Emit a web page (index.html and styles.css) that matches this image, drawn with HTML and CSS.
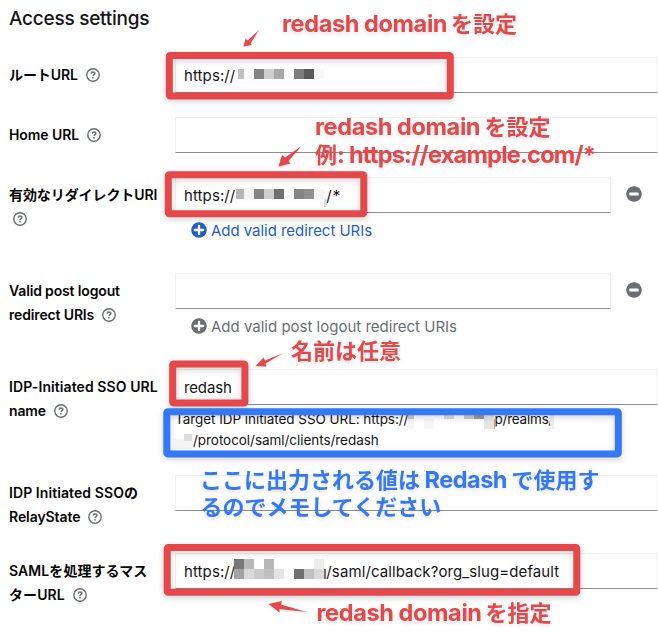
FILE: index.html
```html
<!DOCTYPE html>
<html lang="ja">
<head>
<meta charset="utf-8">
<title>Access settings</title>
<link rel="stylesheet" href="styles.css">
</head>
<body>
<svg class="defs" width="0" height="0" aria-hidden="true">
  <symbol id="help" viewBox="0 0 14 14"><circle cx="7" cy="7" r="6.200" fill="none" stroke="#6a6e73" stroke-width="1.400"/><path d="M5.100 5.600C5.200 4.500 6 4 7 4s1.900.600 1.900 1.600C8.900 6.700 7 6.700 7 8.100" fill="none" stroke="#6a6e73" stroke-width="1.400"/><circle cx="7" cy="9.800" r=".9" fill="#6a6e73"/></symbol>
  <symbol id="plus" viewBox="0 0 16 16"><circle cx="8" cy="8" r="7.800" fill="currentColor"/><path d="M8 3.800v8.400M3.800 8h8.400" stroke="#fff" stroke-width="2.300" stroke-linecap="round"/></symbol>
  <symbol id="minus" viewBox="0 0 16 16"><circle cx="8" cy="8" r="7.800" fill="#6a6e73"/><rect x="3.300" y="6.600" width="9.400" height="2.800" rx=".5" fill="#fff"/></symbol>
</svg>
<main class="page">
  <h1 class="title">Access settings</h1>
  <div class="form">
    <div class="row short"><div class="label"><span>ルートURL</span><svg class="help"><use href="#help"/></svg></div><div class="control"><div class="input">https://</div></div></div>
    <div class="row short"><div class="label"><span>Home URL</span><svg class="help"><use href="#help"/></svg></div><div class="control"><div class="input"></div></div></div>
    <div class="row tall"><div class="label"><span>有効なリダイレクトURI</span><br><svg class="help wrapped"><use href="#help"/></svg></div><div class="control"><div class="line"><div class="input"><span>https://</span><span class="suffix wild">/*</span></div><svg class="remove"><use href="#minus"/></svg></div><div class="add active"><svg><use href="#plus"/></svg><span>Add valid redirect URIs</span></div></div></div>
    <div class="row tall"><div class="label"><span class="tight">Valid post logout<br>redirect URIs</span><svg class="help"><use href="#help"/></svg></div><div class="control"><div class="line"><div class="input"></div><svg class="remove"><use href="#minus"/></svg></div><div class="add"><svg><use href="#plus"/></svg><span>Add valid post logout redirect URIs</span></div></div></div>
    <div class="row sso"><div class="label"><span class="wide">IDP-Initiated SSO URL</span><br><span class="tight">name</span><svg class="help"><use href="#help"/></svg></div><div class="control"><div class="input"><span class="tight">redash</span></div><div class="hint"><div><span>Target IDP initiated SSO URL: https://</span><span class="realms">p/realms/</span></div><div class="path">/protocol/saml/clients/redash</div></div></div></div>
    <div class="row relay"><div class="label"><span class="wide">IDP Initiated SSOの</span><br>RelayState<svg class="help"><use href="#help"/></svg></div><div class="control"><div class="input"></div></div></div>
    <div class="row relay"><div class="label"><span class="wide">SAMLを処理するマス<br>ターURL</span><svg class="help"><use href="#help"/></svg></div><div class="control"><div class="input"><span>https://</span><span class="suffix callback">/saml/callback?org_slug=default</span></div></div></div>
  </div>
  <svg class="overlay" viewBox="0 0 658 632">
    <g shape-rendering="crispEdges">
      <path fill="#c0c0c0" d="M238 69h6v10h-6z"/><path fill="#fafafa" d="M244 69h10v10h-10z"/><path fill="#858585" d="M254 69h10v10h-10z"/><path fill="#cecece" d="M264 69h10v10h-10z"/><path fill="#a8a8a8" d="M274 69h10v10h-10z"/><path fill="#7d7d7d" d="M294 69h10v10h-10z"/><path fill="#5a5a5a" d="M304 69h10v10h-10z"/><path fill="#f7f7f7" d="M314 69h10v10h-10z"/>
      <path fill="#b5b5b5" d="M236 189h8v10h-8z"/><path fill="#f3f3f3" d="M244 189h10v10h-10z"/><path fill="#858585" d="M254 189h10v10h-10z"/><path fill="#cecece" d="M264 189h10v10h-10z"/><path fill="#6f6f6f" d="M274 189h10v10h-10z"/><path fill="#f7f7f7" d="M284 189h10v10h-10z"/><path fill="#858585" d="M294 189h10v10h-10z"/><path fill="#8f8f8f" d="M304 189h10v10h-10z"/><path fill="#f5f5f5" d="M314 189h10v10h-10z"/><path fill="#ddd" d="M324 199h3v8h-3z"/>
      <path fill="#ccc" d="M408 415h6v4h-6zM464 415h10v4h-10z"/><path fill="#ddd" d="M444 415h10v4h-10zM184 434h8v7h-8z"/><path fill="#999" d="M474 415h10v4h-10z"/><path fill="#f5f5f5" d="M408 419h6v10h-6zM424 419h10v10h-10zM174 439h10v10h-10zM184 441h8v8h-8z"/><path fill="#e5e5e5" d="M484 415h10v14h-10z"/><path fill="#aaa" d="M494 419h1v10h-1z"/><path fill="#eee" d="M550 415h4v14h-4z"/>
      <path fill="#787878" d="M234 559h10v10h-10z"/><path fill="#b8b8b8" d="M244 559h10v10h-10zM264 559h10v10h-10z"/><path fill="#ececec" d="M314 559h10v10h-10z"/><path fill="#a3a3a3" d="M234 569h10v10h-10z"/><path fill="#d9d9d9" d="M244 569h10v10h-10zM314 569h10v10h-10z"/><path fill="#cacaca" d="M254 569h10v10h-10z"/><path fill="#bfbfbf" d="M264 569h10v10h-10zM304 569h10v10h-10z"/><path fill="#e4e4e4" d="M274 569h10v10h-10z"/><path fill="#fcfcfc" d="M284 569h10v10h-10z"/><path fill="#6f6f6f" d="M294 569h10v10h-10zM324 569h2v10h-2z"/>
    </g>
    <g class="frames">
      <rect x="169.300" y="55.500" width="281" height="40.500" rx="1"/>
      <rect x="168.300" y="174.700" width="195.500" height="39" rx="1"/>
      <rect x="172.700" y="364" width="72.200" height="39" rx="1"/>
      <rect x="167.200" y="547.500" width="409.600" height="44.700" rx="1"/>
      <rect class="blue-frame" x="166.800" y="411.700" width="451.500" height="42.200" rx="1"/>
    </g>
    <g class="arrows">
      <path d="M259 30L250.500 43.500L252 45L243.500 46.500L245.500 38.500L247.500 40.500Z"/>
      <path d="M301.500 146L288.500 161L290.500 163.500L278.500 166.500L282 155L285 157.500Z"/>
      <path d="M283.500 353L265.500 363.500L266.500 366.500L255.500 366L263.500 357.500L265 360.500Z"/>
      <path d="M306.500 612L279.500 609L279.500 612.500L268.500 604L282 601L281 604.500Z"/>
    </g>
    <g class="notes">
      <text y="32"><tspan x="282" textLength="165.500">redash domain</tspan><tspan class="jp" x="451">を設定</tspan></text>
      <text y="135"><tspan x="315" textLength="165.500">redash domain</tspan><tspan class="jp" x="484.500">を設定</tspan></text>
      <text y="163"><tspan class="jp" x="315">例</tspan><tspan x="337" textLength="259">: https://example.com/*</tspan></text>
      <text class="jp" x="291" y="359">名前は任意</text>
      <g class="blue"><text y="487.500"><tspan class="jp" x="200">ここに出力される値は</tspan><tspan x="424.500" textLength="83">Redash</tspan><tspan class="jp" x="511.500">で使用す</tspan></text>
      <text class="jp" x="200.500" y="515">るのでメモしてください</text></g>
      <text y="620.500"><tspan x="316.500" textLength="165.500">redash domain</tspan><tspan class="jp" x="485.500">を指定</tspan></text>
    </g>
  </svg>
</main>
</body>
</html>
```

FILE: styles.css
```css
* { box-sizing: border-box; }
body { margin: 0; background: #fff; color: #151515; font-family: Inter, "Noto Sans CJK JP", sans-serif; }
.defs { position: absolute; }
.page { position: relative; width: 658px; height: 632px; overflow: hidden; }
.title { height: 57px; margin: 0; padding: 6px 0 0 9px; font-size: 19px; font-weight: 550; line-height: 26px; letter-spacing: -0.25px; }
.row { display: grid; grid-template-columns: 166px 483px; padding-left: 9px; }
.short { height: 60px; }
.tall { height: 96px; }
.sso { height: 106px; }
.relay { height: 78px; }
.label { padding-top: 6px; color: #050505; font-size: 14px; font-weight: 600; line-height: 24px; white-space: nowrap; letter-spacing: -0.08px; }
.label .wide { letter-spacing: 0.08px; }
.tight { letter-spacing: -0.15px; }
.help { width: 14px; height: 14px; margin-left: 8px; vertical-align: -2px; }
.help.wrapped { margin-left: 4px; }
.input { display: flex; width: 483px; height: 36px; padding: 0 8px; border: 1px solid #f0f0f0; border-bottom-color: #8a8d90; background: #fff; font-size: 15px; line-height: 35px; white-space: nowrap; letter-spacing: 0.1px; }
.line { display: flex; align-items: center; }
.line .input { width: 436px; }
.remove { width: 16px; height: 16px; margin: 0 0 2px 15px; }
.suffix { margin-left: 91px; }
.wild { letter-spacing: 1px; }
.add { display: flex; align-items: center; gap: 4px; height: 24px; margin-top: 5px; padding-left: 16px; color: #6a6e73; font-size: 15px; white-space: nowrap; }
.add svg { width: 16px; height: 16px; }
.active { color: #2460c4; letter-spacing: -0.04px; }
.hint { margin-top: 4px; font-size: 13.5px; line-height: 21px; white-space: nowrap; letter-spacing: -0.05px; }
.hint > div { display: flex; }
.realms { margin-left: 86px; letter-spacing: -0.2px; }
.path { padding-left: 18px; }
.overlay { position: absolute; inset: 0; width: 658px; height: 632px; }
.frames { fill: none; stroke: #e5484b; stroke-width: 7; filter: drop-shadow(0 2px 3px rgb(0 0 0 / 18%)); }
.blue-frame { stroke: #3478f6; }
.arrows { fill: #e5484b; filter: drop-shadow(0 1px 1px rgb(0 0 0 / 12%)); }
.notes { fill: #e5484b; font-size: 23.5px; font-weight: 650; filter: drop-shadow(0 2px 2px rgb(0 0 0 / 12%)); }
.jp { font-family: "Noto Sans CJK JP", sans-serif; font-size: 22px; font-weight: 700; }
.blue { fill: #3478f6; }
```
